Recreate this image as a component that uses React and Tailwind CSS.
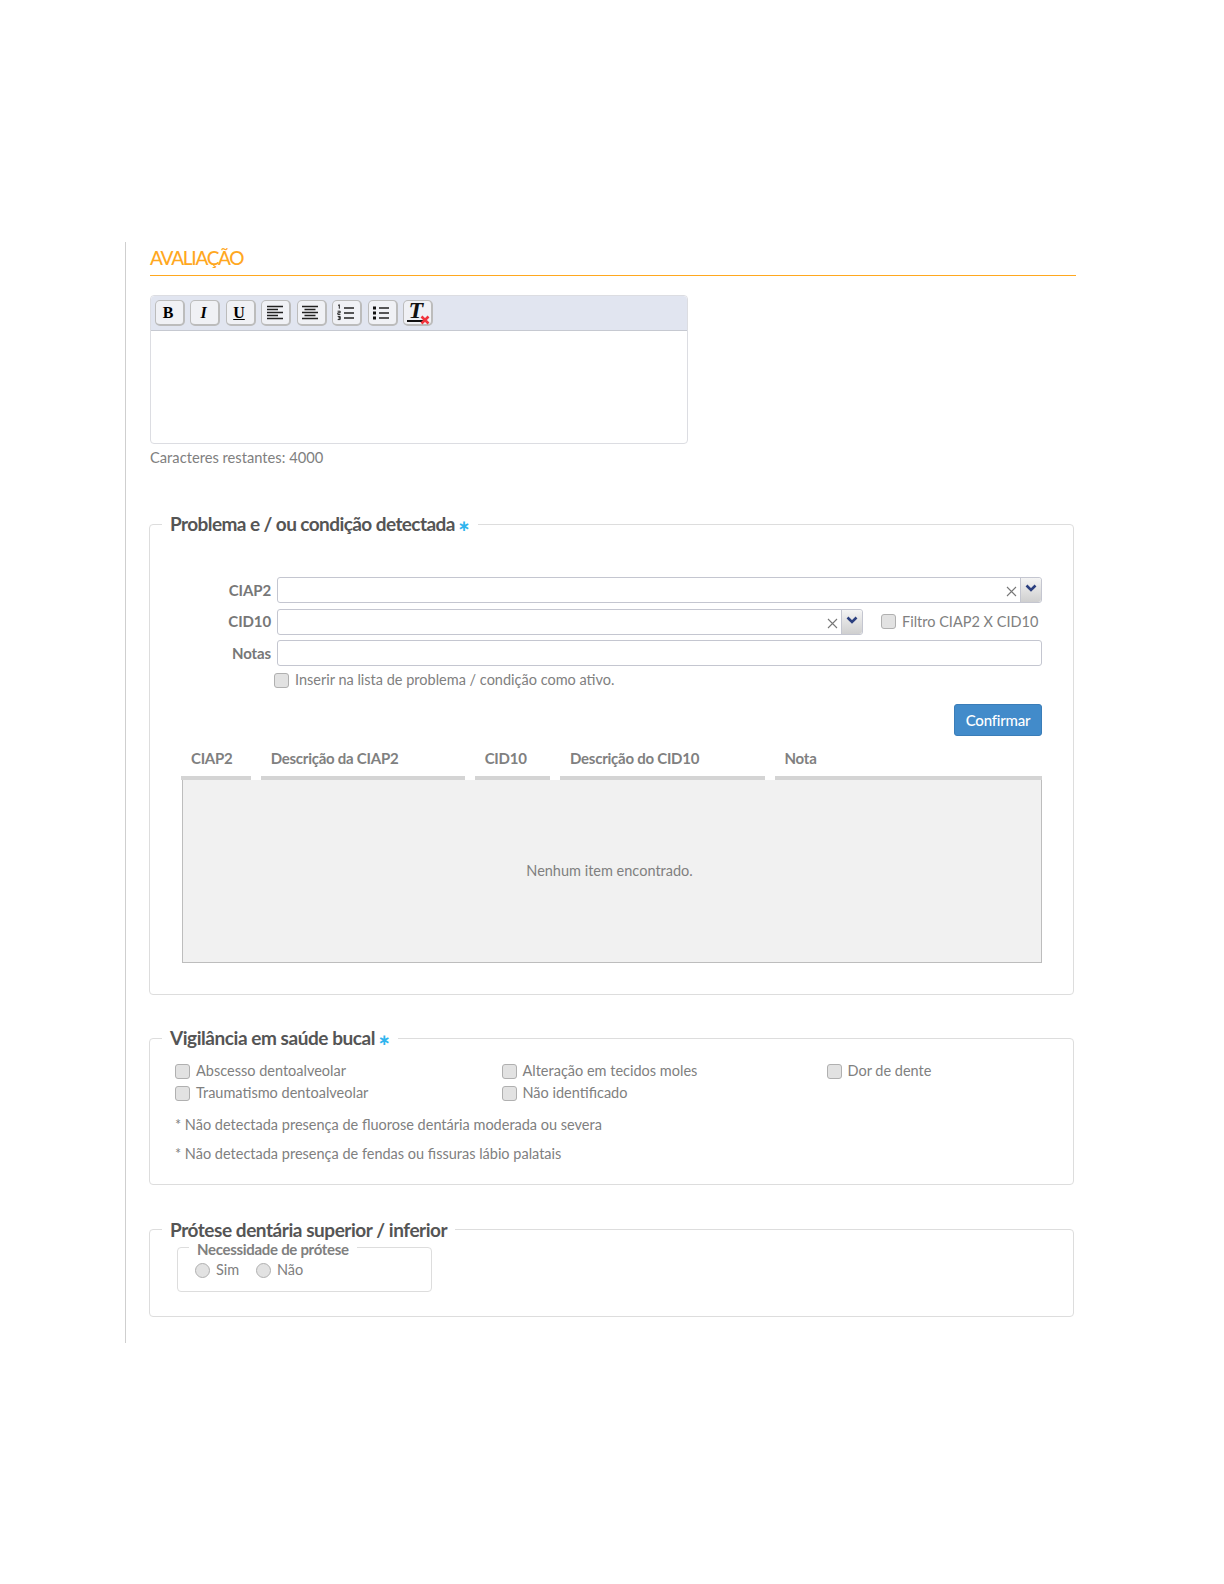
import React from "react";

const Box = ({ round }) => (
  <span className={`inline-block shrink-0 w-[15px] h-[15px] border border-[#b0b0b0] bg-[#e2e2e2] ${round ? "rounded-full" : "rounded-[3px]"}`} />
);

const Check = ({ label, className = "" }) => (
  <label className={`flex items-center gap-[6px] h-[20px] text-[14.5px] text-[#808080] ${className}`}>
    <Box />
    <span>{label}</span>
  </label>
);

const Tool = ({ children }) => (
  <button className="w-[30px] h-[26px] flex items-center justify-center rounded-[5px] border border-[#bcbcbc] border-b-2 border-r-2 bg-[#f0f1f5] text-black">
    {children}
  </button>
);

const Lines = ({ kind }) => (
  <svg width="20" height="18" viewBox="0 0 20 18" stroke="#222" strokeWidth="1.3" fill="none">
    {kind === "left" && <path d="M1 2.5h16M1 5.5h11M1 8.5h16M1 11.5h11M1 14.5h16" />}
    {kind === "center" && <path d="M1 2.5h16M3.5 5.5h11M1 8.5h16M3.5 11.5h11M1 14.5h16" />}
    {kind === "ol" && (
      <>
        <path d="M7 4h10M7 9h10M7 14h10" strokeWidth="1.4" />
        <path d="M1 1.5l1.3-.8v4M.6 7.2h2.6v1.6H.8v1.6h2.6M.7 12.4h2.5v1.5H1.6h1.6v1.7H.7" strokeWidth="1" />
      </>
    )}
    {kind === "ul" && (
      <>
        <path d="M7 4h10M7 9h10M7 14h10" strokeWidth="1.4" />
        <path d="M1 2.5h3v3H1zM1 7.5h3v3H1zM1 12.5h3v3H1z" fill="#111" stroke="none" />
      </>
    )}
  </svg>
);

const ClearFormat = () => (
  <span className="relative block w-[26px] h-[24px]">
    <span className="absolute left-[4px] top-[-3px] text-[24px] leading-[24px] font-bold italic text-[#111] [font-family:'Liberation_Serif',serif]">T</span>
    <span className="absolute left-[2px] bottom-[3px] w-[17px] h-[2px] bg-[#111]" />
    <svg className="absolute right-[1px] bottom-0" width="10" height="10" viewBox="0 0 10 10" stroke="#f0343c" strokeWidth="2.6">
      <path d="M1.5 1.5l7 7M8.5 1.5l-7 7" />
    </svg>
  </span>
);

const serifIcon = "text-[16px] leading-none font-bold pr-[2px] [font-family:'Liberation_Serif',serif]";

const Toolbar = () => (
  <div className="h-[35px] bg-[#e1e5f0] border-b border-[#c6c9d1] rounded-t-[4px] flex items-center pl-[3.5px] gap-[5.5px]">
    <Tool><span className={serifIcon}>B</span></Tool>
    <Tool><span className={`${serifIcon} italic`}>I</span></Tool>
    <Tool><span className={`${serifIcon} underline`}>U</span></Tool>
    <Tool><Lines kind="left" /></Tool>
    <Tool><Lines kind="center" /></Tool>
    <Tool><Lines kind="ol" /></Tool>
    <Tool><Lines kind="ul" /></Tool>
    <Tool><ClearFormat /></Tool>
  </div>
);

const Asterisk = () => (
  <span className="text-[#2fb4ee] font-bold ml-[3px] [font-family:'DejaVu_Sans',sans-serif] text-[15px]">∗</span>
);

const Legend = ({ children, star, tight }) => (
  <legend className={`ml-[12px] px-[8px] pt-[2px] text-[19px] leading-[22px] font-bold text-[#555] ${tight ? "tracking-[-0.58px]" : "tracking-[-0.45px]"}`}>
    {children}
    {star && <Asterisk />}
  </legend>
);

const Select = ({ className }) => (
  <div className={`h-[26px] flex border border-[#c4c6d0] rounded-[3px] bg-white ${className}`}>
    <div className="flex-1 flex items-center justify-end pr-[3px] pt-[3px]">
      <svg width="11" height="11" viewBox="0 0 11 11" stroke="#777" strokeWidth="1.1"><path d="M1 1l9 9M10 1l-9 9" /></svg>
    </div>
    <div className="w-[21px] border-l border-[#c4c6d0] flex justify-center pt-[6px] bg-gradient-to-b from-[#f4f4f4] to-[#cfcfcf] rounded-r-[3px]">
      <svg width="12" height="8" viewBox="0 0 12 8" fill="none" stroke="#2b3f7f" strokeWidth="2.6"><path d="M1.5 1.5L6 6l4.5-4.5" /></svg>
    </div>
  </div>
);

const Label = ({ children }) => (
  <span className="w-[127px] pr-[6px] text-right text-[15px] font-bold tracking-[-0.1px] text-[#777] shrink-0">{children}</span>
);

const cols = [
  ["CIAP2", "w-[70px]"],
  ["Descrição da CIAP2", "w-[204.3px]"],
  ["CID10", "w-[75.7px]"],
  ["Descrição do CID10", "w-[204.8px]"],
  ["Nota", "flex-1"],
];

export default function App() {
  return (
    <div className="min-h-[1584px] bg-white pt-[242px] pl-[125px] [font-family:Lato,sans-serif]">
      <div className="w-[951px] h-[1101px] border-l border-[#cfcfcf] pl-[23px]">
        <h2 className="ml-[1px] h-[34px] border-b border-[#ffa81f] text-[19px] leading-[32px] font-medium tracking-[-1.3px] text-[#ffa81f] w-[926px]">
          AVALIAÇÃO
        </h2>

        <div className="ml-[1px] mt-[19px] w-[538px] h-[149px] border border-[#dcdde2] rounded-[4px]">
          <Toolbar />
        </div>
        <p className="ml-[1px] mt-[4px] text-[14.7px] leading-[18px] text-[#808080]">Caracteres restantes: 4000</p>

        <fieldset className="mt-[45px] w-[925px] h-[484px] border border-[#dddddd] rounded-[4px]">
          <Legend star tight>Problema e / ou condição detectada</Legend>
          <div className="mt-[40px] flex flex-col pr-[31px]">
            <div className="flex items-center h-[26px]">
              <Label>CIAP2</Label>
              <Select className="w-[765px]" />
            </div>
            <div className="flex items-center h-[26px] mt-[5.5px]">
              <Label>CID10</Label>
              <Select className="w-[586px]" />
              <Check label="Filtro CIAP2 X CID10" className="ml-[18px]" />
            </div>
            <div className="flex items-center h-[26px] mt-[5.5px]">
              <Label>Notas</Label>
              <div className="w-[765px] h-[26px] border border-[#c4c6d0] rounded-[3px] bg-white" />
            </div>
            <Check label="Inserir na lista de problema / condição como ativo." className="mt-[4px] ml-[124px]" />
            <div className="flex justify-end mt-[14px]">
              <button className="w-[88px] h-[32px] bg-[#428bca] border border-[#3a7db8] rounded-[3px] text-white text-[15px] font-medium tracking-[-0.2px]">
                Confirmar
              </button>
            </div>
            <div className="ml-[31px] flex gap-[9.7px]">
              {cols.map(([t, w]) => (
                <div key={t} className={`${w} h-[44px] border-b-4 border-[#d4d4d4] pl-[10px] pt-[12px] text-[15px] leading-[20px] font-bold tracking-[-0.25px] text-[#808080]`}>
                  {t}
                </div>
              ))}
            </div>
            <div className="ml-[32px] h-[183px] pr-[5px] bg-[#f1f1f1] border border-[#bdbdbd] border-t-0 flex items-center justify-center text-[14.5px] text-[#808080]">
              Nenhum item encontrado.
            </div>
          </div>
        </fieldset>

        <fieldset className="mt-[30px] w-[925px] h-[160px] border border-[#dddddd] rounded-[4px]">
          <Legend star>Vigilância em saúde bucal</Legend>
          <div className="pl-[25px]">
            <div className="grid grid-cols-[326.5px_325px_1fr] gap-y-[2px] mt-[10px]">
              <Check label="Abscesso dentoalveolar" />
              <Check label="Alteração em tecidos moles" />
              <Check label="Dor de dente" />
              <Check label="Traumatismo dentoalveolar" />
              <Check label="Não identificado" />
            </div>
            <p className="mt-[12px] text-[14.5px] leading-[20px] text-[#808080]">* Não detectada presença de fluorose dentária moderada ou severa</p>
            <p className="mt-[9px] text-[14.5px] leading-[20px] text-[#808080]">* Não detectada presença de fendas ou fissuras lábio palatais</p>
          </div>
        </fieldset>

        <fieldset className="mt-[32px] w-[925px] h-[100px] border border-[#dddddd] rounded-[4px]">
          <Legend>Prótese dentária superior / inferior</Legend>
          <fieldset className="ml-[27px] -mt-[2.5px] w-[255px] h-[53.5px] border border-[#dddddd] rounded-[4px]">
            <legend className="ml-[11px] px-[8px] pt-[3px] text-[15px] leading-[14px] font-bold tracking-[-0.3px] text-[#808080]">Necessidade de prótese</legend>
            <div className="mt-[4.5px] ml-[17px] flex items-center h-[20px] text-[14.5px] text-[#808080]">
              <span className="w-[61px] flex items-center gap-[6px]"><Box round /><span>Sim</span></span>
              <span className="flex items-center gap-[6px]"><Box round /><span>Não</span></span>
            </div>
          </fieldset>
        </fieldset>
      </div>
    </div>
  );
}
